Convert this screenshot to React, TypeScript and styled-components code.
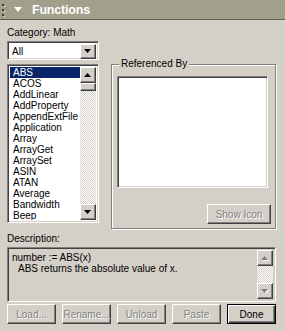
import React from 'react';
import styled, {createGlobalStyle, css} from 'styled-components';

const GlobalStyle = createGlobalStyle`
  html, body {
    margin: 0;
    padding: 0;
    background: #d4d0c8;
  }

  body {
    font-family: "Liberation Sans", Arial, sans-serif;
    font-size: 10px;
    color: #000;
  }
`;

const functionNames = [
    'ABS', 'ACOS', 'AddLinear', 'AddProperty', 'AppendExtFile', 'Application', 'Array',
    'ArrayGet', 'ArraySet', 'ASIN', 'ATAN', 'Average', 'Bandwidth', 'Beep',
];

const buttons = [
    {label: 'Load...', disabled: true},
    {label: 'Rename...', disabled: true},
    {label: 'Unload', disabled: true},
    {label: 'Paste', disabled: true},
    {label: 'Done', disabled: false, isDefault: true},
];

const sunken = css`
  box-sizing: border-box;
  border: 1px solid;
  border-color: #808080 #fff #fff #808080;
  box-shadow: inset 1px 1px #404040, inset -1px -1px #d4d0c8;
`;

const raised = css`
  box-sizing: border-box;
  background: #d4d0c8;
  border: 1px solid;
  border-color: #fff #404040 #404040 #fff;
  box-shadow: inset -1px -1px #808080;
`;

const Arrow = ({up, disabled}: { up?: boolean; disabled?: boolean }) => (
    <svg width="8" height="5" viewBox="0 0 8 5">
        {disabled && <path d={up ? 'M1 5 L4.5 1.5 L8 5 Z' : 'M1 1 L4.5 4.5 L8 1 Z'} fill="#fff"/>}
        <path d={up ? 'M0 4 L3.5 0 L7 4 Z' : 'M0 0 L3.5 4 L7 0 Z'} fill={disabled ? '#808080' : '#000'}/>
    </svg>
);

const App = () => {
    return (
        <>
            <GlobalStyle/>
            <Panel>
                <Header>
                    <svg width="6" height="16" viewBox="0 0 6 16">
                        <rect x="1" y="2" width="2" height="2" fill="#3a3a30"/>
                        <rect x="3" y="4" width="1" height="1" fill="#fff"/>
                        <rect x="1" y="7" width="2" height="2" fill="#3a3a30"/>
                        <rect x="3" y="9" width="1" height="1" fill="#fff"/>
                        <rect x="1" y="12" width="2" height="2" fill="#3a3a30"/>
                        <rect x="3" y="14" width="1" height="1" fill="#fff"/>
                    </svg>
                    <svg width="8" height="5" viewBox="0 0 8 5" style={{marginLeft: 7}}>
                        <path d="M0 0 L8 0 L4 5 Z" fill="#fff"/>
                    </svg>
                    <Title>Functions</Title>
                </Header>
                <Body>
                    <Label>Category: Math</Label>
                    <Select>
                        <SelectValue>All</SelectValue>
                        <ArrowButton><Arrow/></ArrowButton>
                    </Select>
                    <Row>
                        <ListBox>
                            <Items>
                                {functionNames.map((name, i) => (
                                    <Item key={name} selected={i === 0}>{name}</Item>
                                ))}
                            </Items>
                            <ScrollBar>
                                <ArrowButton><Arrow up/></ArrowButton>
                                <Thumb/>
                                <Track/>
                                <ArrowButton><Arrow/></ArrowButton>
                            </ScrollBar>
                        </ListBox>
                        <GroupBox>
                            <Legend>Referenced By</Legend>
                            <WhiteList/>
                            <GroupFooter>
                                <Button disabled width={64}>Show Icon</Button>
                            </GroupFooter>
                        </GroupBox>
                    </Row>
                    <Label style={{marginTop: 4}}>Description:</Label>
                    <DescBox>
                        <DescText>
                            <div>number := ABS(x)</div>
                            <Indent>ABS returns the absolute value of x.</Indent>
                        </DescText>
                        <ScrollBar>
                            <ArrowButton><Arrow up disabled/></ArrowButton>
                            <Track/>
                            <ArrowButton><Arrow disabled/></ArrowButton>
                        </ScrollBar>
                    </DescBox>
                    <ButtonRow>
                        {buttons.map((b) => (
                            <Button key={b.label} disabled={b.disabled} isDefault={b.isDefault} width={49}>
                                {b.label}
                            </Button>
                        ))}
                    </ButtonRow>
                </Body>
            </Panel>
        </>
    );
};

const Panel = styled.div`
  width: 285px;
  height: 331px;
  display: flex;
  flex-direction: column;
  background: #d4d0c8;
  overflow: hidden;
`;

const Header = styled.div`
  height: 19px;
  display: flex;
  align-items: center;
  padding-left: 1px;
  background: #a0a08c;
  border-bottom: 1px solid #5e5e50;
`;

const Title = styled.span`
  margin-left: 10px;
  font-size: 12.5px;
  font-weight: bold;
  color: #fff;
  letter-spacing: -0.2px;
`;

const Body = styled.div`
  display: flex;
  flex-direction: column;
  padding: 7px 9px 0 7px;
`;

const Label = styled.div`
  height: 12px;
  line-height: 12px;
  font-size: 10px;
`;

const Select = styled.div`
  ${sunken};
  margin-top: 2px;
  width: 92px;
  height: 19px;
  padding: 2px;
  display: flex;
  background: #fff;
`;

const SelectValue = styled.div`
  flex: 1;
  padding-left: 2px;
  line-height: 15px;
`;

const ArrowButton = styled.div`
  ${raised};
  width: 16px;
  height: 15px;
  display: flex;
  align-items: center;
  justify-content: center;
  flex-shrink: 0;
`;

const Row = styled.div`
  margin-top: 4px;
  display: flex;
  gap: 12px;
`;

const ListBox = styled.div`
  ${sunken};
  width: 92px;
  height: 159px;
  padding: 2px;
  display: flex;
  background: #fff;
`;

const Items = styled.div`
  flex: 1;
  min-width: 0;
  overflow: hidden;
`;

const Item = styled.div<{ selected?: boolean }>`
  height: 11px;
  line-height: 11px;
  padding-left: 3px;
  font-size: 10px;
  white-space: nowrap;
  background: ${(props) => props.selected ? '#0a246a' : 'transparent'};
  color: ${(props) => props.selected ? '#fff' : '#000'};
`;

const ScrollBar = styled.div`
  width: 16px;
  display: flex;
  flex-direction: column;

  ${ArrowButton} {
    height: 16px;
  }
`;

const Thumb = styled.div`
  ${raised};
  height: 8px;
`;

const Track = styled.div`
  flex: 1;
  background: repeating-conic-gradient(#d4d0c8 0 25%, #fff 0 50%) 0 0 / 2px 2px;
`;

const GroupBox = styled.div`
  position: relative;
  box-sizing: border-box;
  flex: 1;
  height: 165px;
  padding: 11px 7px 4px 5px;
  display: flex;
  flex-direction: column;
  border: 1px solid #808080;
  box-shadow: inset 1px 1px #fff, 1px 1px #fff;
`;

const Legend = styled.div`
  position: absolute;
  top: -7px;
  left: 7px;
  padding: 0 2px;
  line-height: 12px;
  background: #d4d0c8;
`;

const WhiteList = styled.div`
  ${sunken};
  height: 112px;
  background: #fff;
`;

const GroupFooter = styled.div`
  margin-top: auto;
  margin-right: -3px;
  display: flex;
  justify-content: flex-end;
`;

const Button = styled.div<{ disabled?: boolean; isDefault?: boolean; width: number }>`
  ${raised};
  width: ${(props) => props.width}px;
  height: 20px;
  display: flex;
  align-items: center;
  justify-content: center;
  font-size: 10px;
  white-space: nowrap;
  color: ${(props) => props.disabled ? '#808080' : '#000'};
  text-shadow: ${(props) => props.disabled ? '1px 1px #fff' : 'none'};
  ${(props) => props.isDefault && css`
    border: 1px solid #000;
    box-shadow: inset 1px 1px #fff, inset -1px -1px #404040, inset -2px -2px #808080;
  `}
`;

const DescBox = styled.div`
  ${sunken};
  margin-top: 2px;
  height: 55px;
  padding: 2px;
  display: flex;
`;

const DescText = styled.div`
  flex: 1;
  padding: 2px 0 0 2px;
  line-height: 11px;
  font-size: 10px;
`;

const Indent = styled.div`
  padding-left: 6px;
`;

const ButtonRow = styled.div`
  margin-top: 2px;
  display: flex;
  gap: 6px;
`;

export default App;
